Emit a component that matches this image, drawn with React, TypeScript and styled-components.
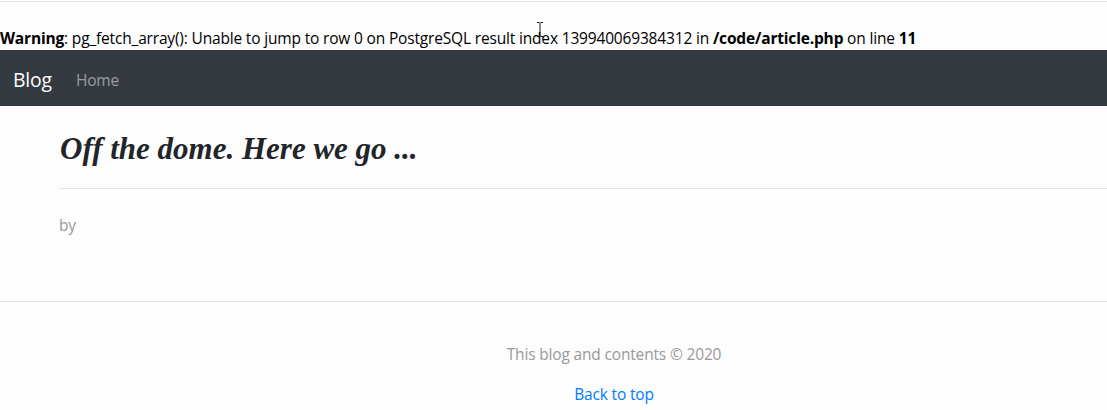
import React from "react";
import styled, { createGlobalStyle } from "styled-components";

const GlobalStyle = createGlobalStyle`
  html, body {
    margin: 0;
    padding: 0;
    background: #fdfdfd;
  }
  body {
    font-family: "Open Sans", "Noto Sans", sans-serif;
    font-size: 15.5px;
    letter-spacing: -0.17px;
    line-height: 24px;
    color: #212529;
  }
`;

const Page = styled.div`
  position: relative;
  overflow: hidden;
`;

const TopRule = styled.div`
  margin-top: 1px;
  height: 1px;
  background: #e2e2e2;
`;

const PhpOutput = styled.div`
  color: #000;
  white-space: nowrap;
  padding-top: 24px;
  height: 24px;
`;

const Navbar = styled.nav`
  height: 56px;
  box-sizing: border-box;
  background: #343a40;
  display: flex;
  align-items: center;
  padding: 11px 13px 7px;
`;

const Brand = styled.a`
  color: #fff;
  font-size: 19.4px;
  line-height: 30px;
  margin-right: 16px;
  text-decoration: none;
`;

const NavLink = styled.a`
  color: rgba(255, 255, 255, 0.5);
  padding: 8px;
  text-decoration: none;
`;

const Container = styled.main`
  margin-left: 44px;
  padding: 24px 0 0 15px;
  height: 171px;
  box-sizing: content-box;
`;

const PostTitle = styled.h2`
  margin: 0;
  font-family: "Liberation Serif", "Times New Roman", serif;
  font-style: italic;
  font-weight: 700;
  font-size: 31px;
  letter-spacing: 0;
  line-height: 37px;
  color: #212529;
  padding-left: 1px;
`;

const Divider = styled.hr`
  margin: 21px 0 0;
  border: 0;
  border-top: 1px solid #e1e3e6;
`;

const Byline = styled.p`
  margin: 24px 0 0;
  color: #999;
`;

const Footer = styled.footer`
  border-top: 1px solid #e1e1e1;
  padding: 40px 0 0 121px;
  text-align: center;
  color: #999;
`;

const FooterLine = styled.p`
  margin: 0 0 16px;
`;

const TopLink = styled.a`
  color: #007bff;
  text-decoration: none;
`;

const Cursor = styled.svg`
  position: absolute;
  left: 536px;
  top: 21px;
`;

export default function App() {
  return (
    <>
      <GlobalStyle />
      <Page>
        <TopRule />
        <PhpOutput>
          <b>Warning</b>: pg_fetch_array(): Unable to jump to row 0 on PostgreSQL result index
          139940069384312 in <b>/code/article.php</b> on line <b>11</b>
        </PhpOutput>
        <Navbar>
          <Brand href="#">Blog</Brand>
          <NavLink href="#">Home</NavLink>
        </Navbar>
        <Container>
          <PostTitle>Off the dome. Here we go ...</PostTitle>
          <Divider />
          <Byline>by </Byline>
        </Container>
        <Footer>
          <FooterLine>This blog and contents © 2020</FooterLine>
          <FooterLine>
            <TopLink href="#">Back to top</TopLink>
          </FooterLine>
        </Footer>
        <Cursor width="8" height="17" viewBox="0 0 8 17">
          <path d="M1 1.5h2.5M4.5 1.5H7M4 2v13M1 15.5h2.5M4.5 15.5H7" stroke="#111" strokeWidth="1" fill="none" />
        </Cursor>
      </Page>
    </>
  );
}
